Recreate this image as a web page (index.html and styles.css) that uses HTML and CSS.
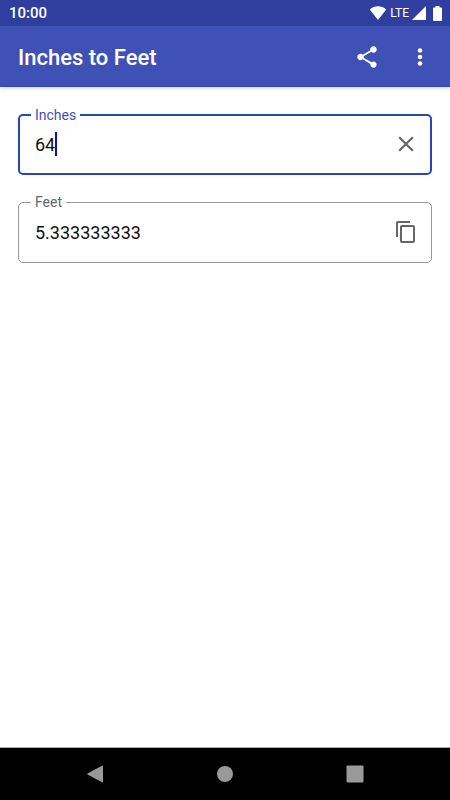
FILE: index.html
```
<!DOCTYPE html>
<html lang="en">
<head>
    <meta charset="UTF-8">
    <meta name="viewport" content="width=device-width, initial-scale=1.0">
    <title>Inches to Feet</title>
    <link rel="stylesheet" href="styles.css">
</head>
<body>
    <div class="status-bar">
        <span class="clock">10:00</span>
        <div class="status-icons">
            <svg width="18" height="14" viewBox="0 0 18 14" fill="#fff"><path d="M9 14L0.8 3.5C5.6-0.7 12.4-0.7 17.2 3.5z"/></svg>
            <span class="network">LTE</span>
            <svg width="14" height="14" viewBox="0 0 14 14" fill="#fff"><path d="M14 0v14H0z"/></svg>
            <svg class="battery" width="9" height="15" viewBox="0 0 9 15" fill="#fff"><path d="M2.5 0h4v1.5H8a1 1 0 0 1 1 1V14a1 1 0 0 1-1 1H1a1 1 0 0 1-1-1V2.5a1 1 0 0 1 1-1h1.5z"/></svg>
        </div>
    </div>

    <header class="app-bar">
        <h1>Inches to Feet</h1>
        <button class="icon-button" aria-label="Share">
            <svg width="26" height="26" viewBox="0 0 24 24" fill="#fff"><path d="M18 16.08c-.76 0-1.44.3-1.96.77L8.91 12.7c.05-.23.09-.46.09-.7s-.04-.47-.09-.7l7.05-4.11c.54.5 1.25.81 2.04.81 1.66 0 3-1.34 3-3s-1.34-3-3-3-3 1.34-3 3c0 .24.04.47.09.7L8.04 9.81C7.5 9.31 6.79 9 6 9c-1.66 0-3 1.34-3 3s1.34 3 3 3c.79 0 1.5-.31 2.04-.81l7.12 4.16c-.05.21-.08.43-.08.65 0 1.61 1.31 2.92 2.92 2.92s2.92-1.31 2.92-2.92-1.31-2.92-2.92-2.92z"/></svg>
        </button>
        <button class="icon-button" aria-label="More options">
            <svg width="26" height="26" viewBox="0 0 24 24" fill="#fff"><circle cx="12" cy="6" r="2.1"/><circle cx="12" cy="12" r="2.1"/><circle cx="12" cy="18" r="2.1"/></svg>
        </button>
    </header>

    <main class="content">
        <fieldset class="field active">
            <legend><label for="inches">Inches</label></legend>
            <div class="field-row">
                <input id="inches" class="field-input" type="text" inputmode="decimal" value="64">
                <span class="caret"></span>
                <button class="field-button" aria-label="Clear">
                    <svg width="26" height="26" viewBox="0 0 24 24" fill="#666"><path d="M19 6.41L17.59 5 12 10.59 6.41 5 5 6.41 10.59 12 5 17.59 6.41 19 12 13.41 17.59 19 19 17.59 13.41 12z"/></svg>
                </button>
            </div>
        </fieldset>
        <fieldset class="field">
            <legend><label for="feet">Feet</label></legend>
            <div class="field-row">
                <input id="feet" class="field-input" type="text" value="5.333333333" readonly>
                <button class="field-button" aria-label="Copy">
                    <svg width="26" height="26" viewBox="-1 0 26 24" fill="#666"><path d="M16 1H4c-1.1 0-2 .9-2 2v14h2V3h12V1zm3 4H8c-1.1 0-2 .9-2 2v14c0 1.1.9 2 2 2h11c1.1 0 2-.9 2-2V7c0-1.1-.9-2-2-2zm0 16H8V7h11v14z"/></svg>
                </button>
            </div>
        </fieldset>
    </main>

    <nav class="nav-bar">
        <button aria-label="Back">
            <svg width="18" height="18" viewBox="0 0 18 18" fill="#999"><path d="M16 0.7Q17 0.2 17 1.2V16.8Q17 17.8 16 17.3L1.5 9.5Q0.8 9 1.5 8.5z"/></svg>
        </button>
        <button aria-label="Home">
            <svg width="18" height="18" viewBox="0 0 18 18" fill="#999"><circle cx="9" cy="9" r="8"/></svg>
        </button>
        <button aria-label="Recent apps">
            <svg width="18" height="18" viewBox="0 0 18 18" fill="#999"><rect x="0.5" y="0.5" width="17" height="17" rx="1"/></svg>
        </button>
    </nav>
</body>
</html>
```
FILE: styles.css
```
* {
    box-sizing: border-box;
}
body {
    margin: 0;
    min-height: 100vh;
    display: flex;
    flex-direction: column;
    font-family: Roboto, sans-serif;
    background-color: #fff;
}
svg {
    display: block;
}
button {
    padding: 0;
    border: none;
    background: none;
    cursor: pointer;
}
.status-bar {
    display: flex;
    align-items: center;
    justify-content: space-between;
    height: 26px;
    padding: 0 8px 0 9px;
    background-color: #303f9f;
    color: #fff;
}
.clock {
    font-size: 15px;
    font-weight: 500;
}
.status-icons {
    display: flex;
    align-items: center;
    gap: 3px;
}
.network {
    font-size: 12px;
}
.battery {
    margin-left: 4px;
}
.app-bar {
    display: flex;
    align-items: center;
    height: 61px;
    padding: 2px 4px 0 18px;
    background-color: #3f51b5;
    border-bottom: 1px solid #3046b4;
    box-shadow: 0 1px 4px rgba(0, 0, 0, 0.2);
}
.app-bar h1 {
    flex: 1;
    margin: 0;
    color: #fff;
    font-size: 22px;
    font-weight: 500;
}
.icon-button {
    display: flex;
    align-items: center;
    justify-content: center;
    width: 53px;
    height: 53px;
}
.content {
    flex: 1;
    display: flex;
    flex-direction: column;
    gap: 19px;
    padding: 20px 18px;
}
.field {
    min-width: 0;
    margin: 0;
    padding: 0 12px;
    border: 1px solid #999;
    border-radius: 5px;
    color: #666;
}
.field legend {
    padding: 0 4px;
    font-size: 14px;
    line-height: 16px;
}
.field-row {
    display: flex;
    align-items: center;
    height: 52px;
    padding: 0 0 8px 4px;
}
.field-input {
    flex: 1;
    min-width: 0;
    padding: 0;
    border: none;
    outline: none;
    background: none;
    color: #111;
    font-family: inherit;
    font-size: 18px;
}
.field-button {
    margin-left: auto;
}
.field.active {
    padding: 0 11px;
    border: 2px solid #2846ba;
    color: #3f51b5;
}
.active .field-row {
    height: 50px;
}
.active .field-input {
    flex: none;
    field-sizing: content;
}
.caret {
    width: 2px;
    height: 24px;
    background-color: #0a10a8;
}
.nav-bar {
    display: flex;
    height: 53px;
    padding: 0 30px;
    border-top: 1px solid #aaa;
    background-color: #000;
}
.nav-bar button {
    flex: 1;
    display: flex;
    align-items: center;
    justify-content: center;
}
```
